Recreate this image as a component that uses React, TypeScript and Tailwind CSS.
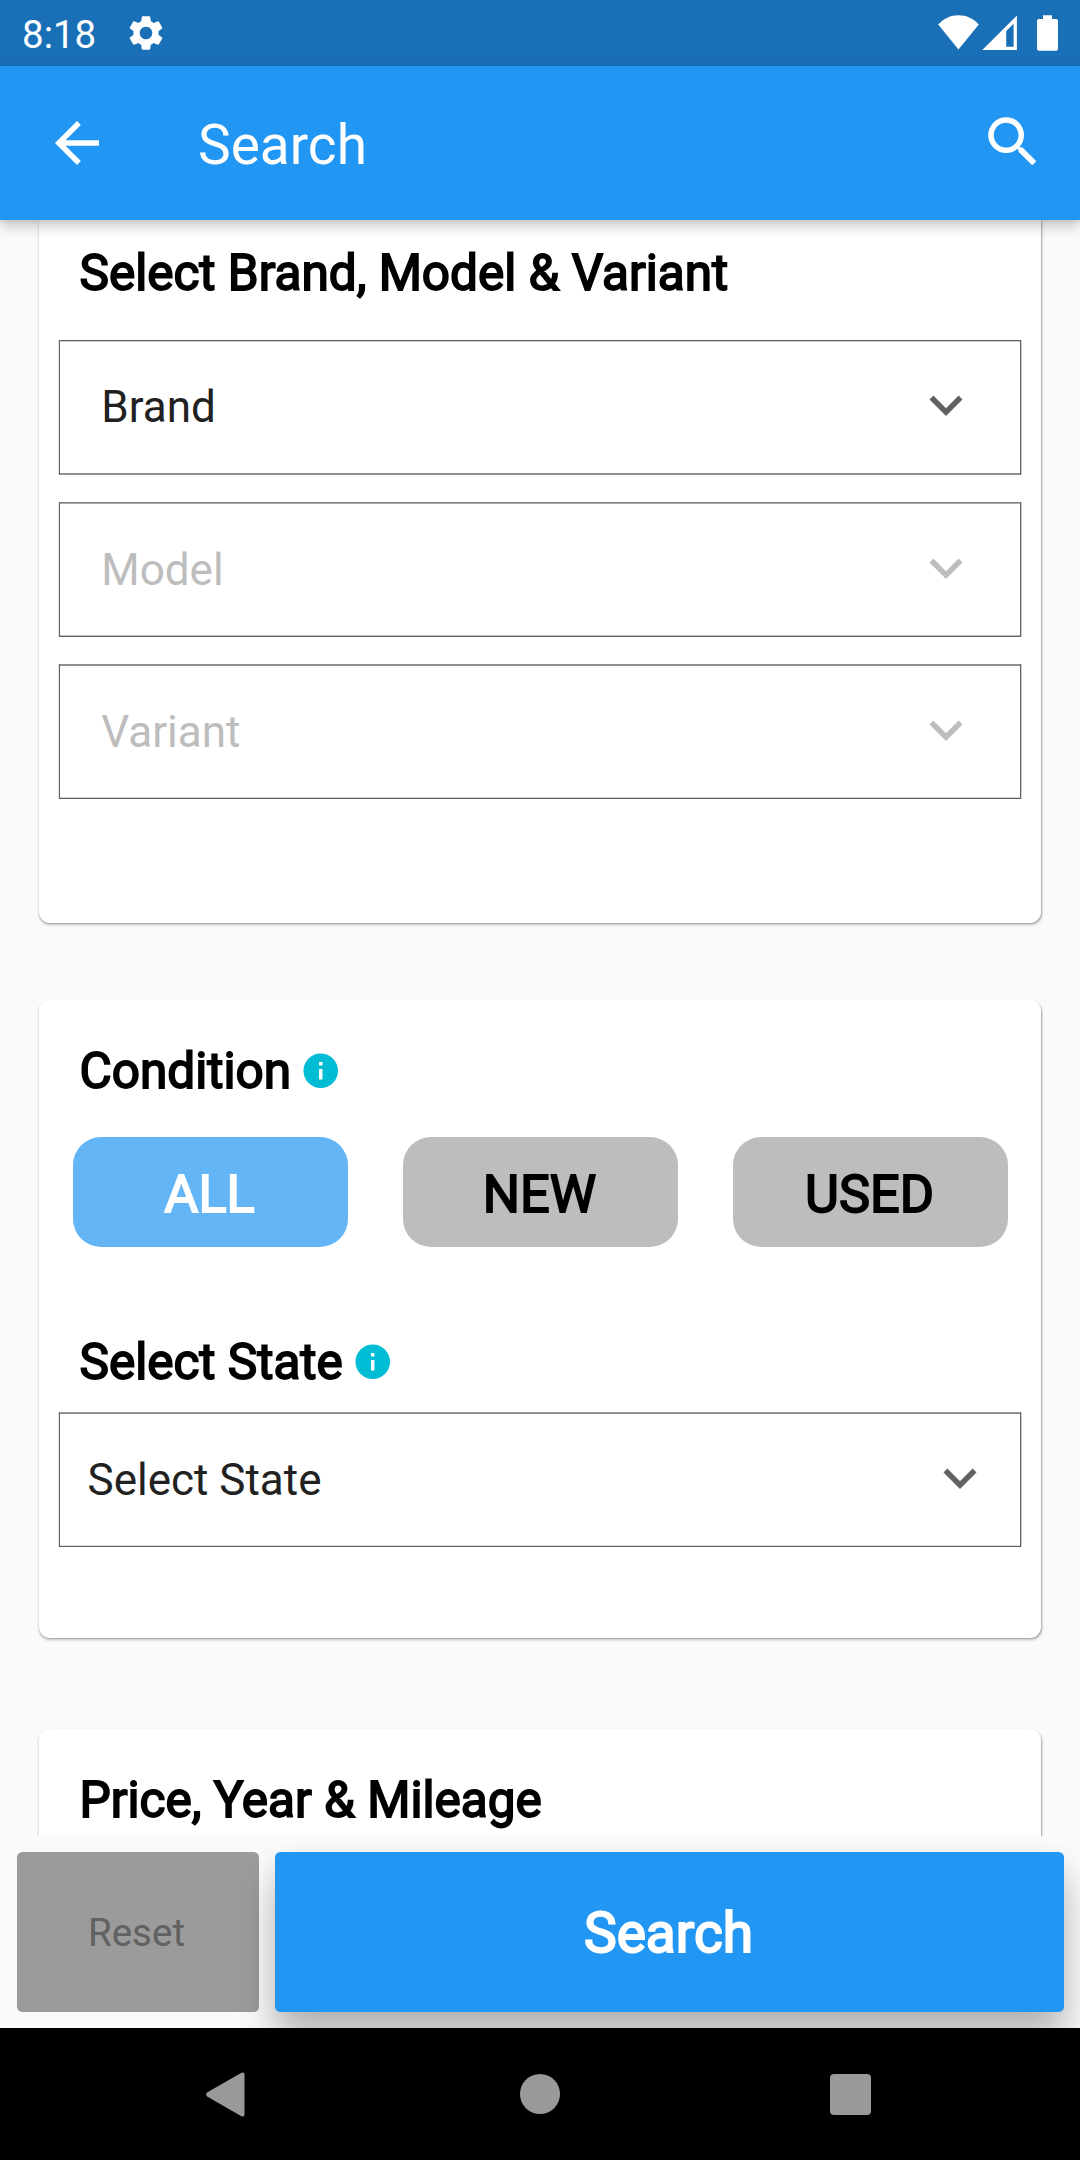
import React from 'react';
import { MdSettings } from 'react-icons/md';

const heading =
  'text-[49.5px] leading-[58px] h-[58px] whitespace-nowrap text-black [-webkit-text-stroke:1.8px_black]';

function Chevron({ className }: { className: string }) {
  return (
    <svg viewBox="0 0 24 24" fill="currentColor" className={`size-[66px] shrink-0 ${className}`}>
      <path d="M7.41 8.59 12 13.17l4.59-4.58L18 10l-6 6-6-6z" />
    </svg>
  );
}

function InfoIcon() {
  return (
    <svg viewBox="0 0 24 24" fill="#00bcd4" className="relative -top-[0.5px] size-[41.5px] shrink-0">
      <path d="M12 2C6.48 2 2 6.48 2 12s4.48 10 10 10 10-4.48 10-10S17.52 2 12 2zm1 15h-2v-6h2v6zm0-8h-2V7h2v2z" />
    </svg>
  );
}

function SelectBox({
  label,
  className,
  tone = 'text-[#212121]',
  arrow = 'text-[#616161]',
}: {
  label: string;
  className: string;
  tone?: string;
  arrow?: string;
}) {
  return (
    <div className={`flex items-center justify-between border ${className}`}>
      <span className={`text-[44px] leading-[52px] whitespace-nowrap ${tone}`}>{label}</span>
      <Chevron className={`mb-1 ${arrow}`} />
    </div>
  );
}

function Pill({ label, className }: { label: string; className: string }) {
  return (
    <button
      className={`h-[110px] w-[275px] rounded-[28px] pt-[5px] pr-[1px] text-[52.25px] leading-[61px] ${className}`}
    >
      {label}
    </button>
  );
}

const card =
  'mx-[39px] bg-white px-[20px] shadow-[0.5px_2px_3px_rgba(0,0,0,0.22),0.3px_1px_1px_rgba(0,0,0,0.16)]';

export default function App() {
  return (
    <div className="flex h-[2160px] w-[1080px] flex-col overflow-hidden bg-[#fafafa] font-[Roboto,sans-serif] font-normal">
      {/* Status bar */}
      <div className="flex h-[66px] shrink-0 items-center bg-[#1a70b7] text-white">
        <span className="ml-[22px] pt-[3px] text-[38.5px] leading-[45px]">8:18</span>
        <MdSettings className="ml-[29px] size-[42px]" />
        <svg viewBox="0 0 122 38" fill="white" className="mr-[20px] ml-auto h-[38px] w-[122px]">
          <path d="M0.2 10.5C5.5 4.5 12.5 1.2 20.5 1.2S35.500 4.500 40.800 10.500L20.500 35.500Z" />
          <path
            fillRule="evenodd"
            d="M44.300 36 78.900 1.400V36ZM68.200 32.700H75.600V9.700L68.200 17.100Z"
          />
          <path d="M105 1.300h9v3.800h4q2 0 2 2v27.600q0 2-2 2h-17q-2 0-2-2V7.100q0-2 2-2h4z" />
        </svg>
      </div>

      {/* App bar */}
      <header className="z-10 flex h-[154px] shrink-0 items-center bg-[#2196f3] text-white shadow-[0_5px_14px_rgba(0,0,0,0.24),0_2px_4px_rgba(0,0,0,0.06)]">
        <svg viewBox="0 0 24 24" fill="currentColor" className="ml-[44px] size-[66px]">
          <path d="M20 11H7.830l5.590-5.590L12 4l-8 8 8 8 1.410-1.410L7.830 13H20v-2z" />
        </svg>
        <h1 className="ml-[88px] pt-[4px] text-[55px] leading-[64px]">Search</h1>
        <svg viewBox="0 0 24 24" fill="currentColor" className="mr-[34px] mb-[2px] ml-auto size-[66px]">
          <path d="M15.500 14h-.790l-.280-.270A6.471 6.471 0 0 0 16 9.500 6.500 6.500 0 1 0 9.500 16c1.610 0 3.090-.590 4.230-1.570l.270.280v.790l5 4.990L20.490 19l-4.990-5zm-6 0C7.010 14 5 11.990 5 9.500S7.010 5 9.500 5 14 7.010 14 9.500 11.990 14 9.500 14z" />
        </svg>
      </header>

      {/* Scrolling form */}
      <main className="flex h-[1616px] shrink-0 flex-col overflow-hidden">
        <section className={`${card} h-[703px] shrink-0 rounded-b-[11px] pt-[24px]`}>
          <h2 className={`${heading} ml-[20.5px]`}>Select Brand, Model &amp; Variant</h2>
          <div className="mt-[38px] flex flex-col">
            <SelectBox
              label="Brand"
              className="h-[135px] border-[#616161] border-b-[#919191] pr-[41.5px] pb-[2px] pl-[41.25px] shadow-[inset_0_1px_#cfcfcf,inset_0_-1px_#919191,-1px_0_#e4e4e4,1px_0_#d0d0d0]"
            />
            <SelectBox
              label="Model"
              tone="text-[#bdbdbd]"
              arrow="text-[#bdbdbd]"
              className="mt-[27px] h-[135px] border-[#616161] border-t-[#7d7d7d] pr-[41.5px] pl-[41.25px] shadow-[inset_0_1px_#acacac,inset_0_-1px_#bdbdbd,-1px_0_#e4e4e4,1px_0_#d0d0d0]"
            />
            <SelectBox
              label="Variant"
              tone="text-[#bdbdbd]"
              arrow="text-[#bdbdbd]"
              className="mt-[27px] h-[135px] border-[#616161] border-t-[#919191] pr-[41.5px] pl-[41.25px] shadow-[inset_0_1px_#919191,inset_0_-1px_#cfcfcf,-1px_0_#e4e4e4,1px_0_#d0d0d0]"
            />
          </div>
        </section>

        <section className={`${card} mt-[77px] h-[638px] shrink-0 rounded-[11px] pt-[42px]`}>
          <div className="ml-[20.5px] flex items-center gap-[8.5px]">
            <h2 className={heading}>Condition</h2>
            <InfoIcon />
          </div>
          <div className="mt-[37px] ml-[13.5px] flex gap-[55px]">
            <Pill label="ALL" className="bg-[#64b5f6] text-white [-webkit-text-stroke:1.8px_white]" />
            <Pill label="NEW" className="bg-[#bdbdbd] text-black [-webkit-text-stroke:1.8px_black]" />
            <Pill label="USED" className="bg-[#bdbdbd] text-black [-webkit-text-stroke:1.8px_black]" />
          </div>
          <div className="mt-[86px] ml-[20.5px] flex items-center gap-[9px]">
            <h2 className={heading}>Select State</h2>
            <InfoIcon />
          </div>
          <SelectBox
            label="Select State"
            className="mt-[21px] h-[135px] border-[#616161] border-t-[#9d9d9d] pr-[27.5px] pl-[27.5px] shadow-[inset_0_1px_#858585,inset_0_-1px_#dcdcdc,-1px_0_#e4e4e4,1px_0_#d0d0d0]"
          />
        </section>

        <section className={`${card} mt-[91px] h-[400px] shrink-0 rounded-t-[11px] pt-[42px]`}>
          <h2 className={`${heading} ml-[20.5px]`}>Price, Year &amp; Mileage</h2>
        </section>
      </main>

      {/* Bottom actions */}
      <footer className="flex h-[192px] shrink-0 gap-[16.5px] overflow-hidden bg-[#fafafa] px-[16.5px] py-[16px]">
        <button className="w-[242px] shrink-0 rounded-[5.5px] bg-[#9b9b9b] pt-px pr-[2px] text-[38.5px] leading-[45px] text-[#616161]">
          Reset
        </button>
        <button className="z-10 flex-1 rounded-[5.5px] bg-[#2196f3] pt-[2px] pr-[1.5px] text-[55px] leading-[64px] text-white shadow-[0_30px_40px_rgba(0,0,0,0.23),0_10px_26px_rgba(0,0,0,0.09)] [-webkit-text-stroke:2px_white]">
          Search
        </button>
      </footer>

      {/* System navigation */}
      <nav className="z-20 flex h-[132px] shrink-0 items-center bg-black">
        <svg viewBox="0 0 39 45" fill="#999" className="ml-[206px] h-[45px] w-[39px]">
          <path d="M1.500 20.300 35 .900Q38.500-.700 38.500 2.800V42.200Q38.500 45.700 35 44.100L1.500 24.700Q-1.300 22.500 1.500 20.300Z" />
        </svg>
        <div className="ml-[275px] size-[40px] rounded-full bg-[#999]" />
        <div className="ml-[270px] size-[41px] rounded-[4px] bg-[#999]" />
      </nav>
    </div>
  );
}
